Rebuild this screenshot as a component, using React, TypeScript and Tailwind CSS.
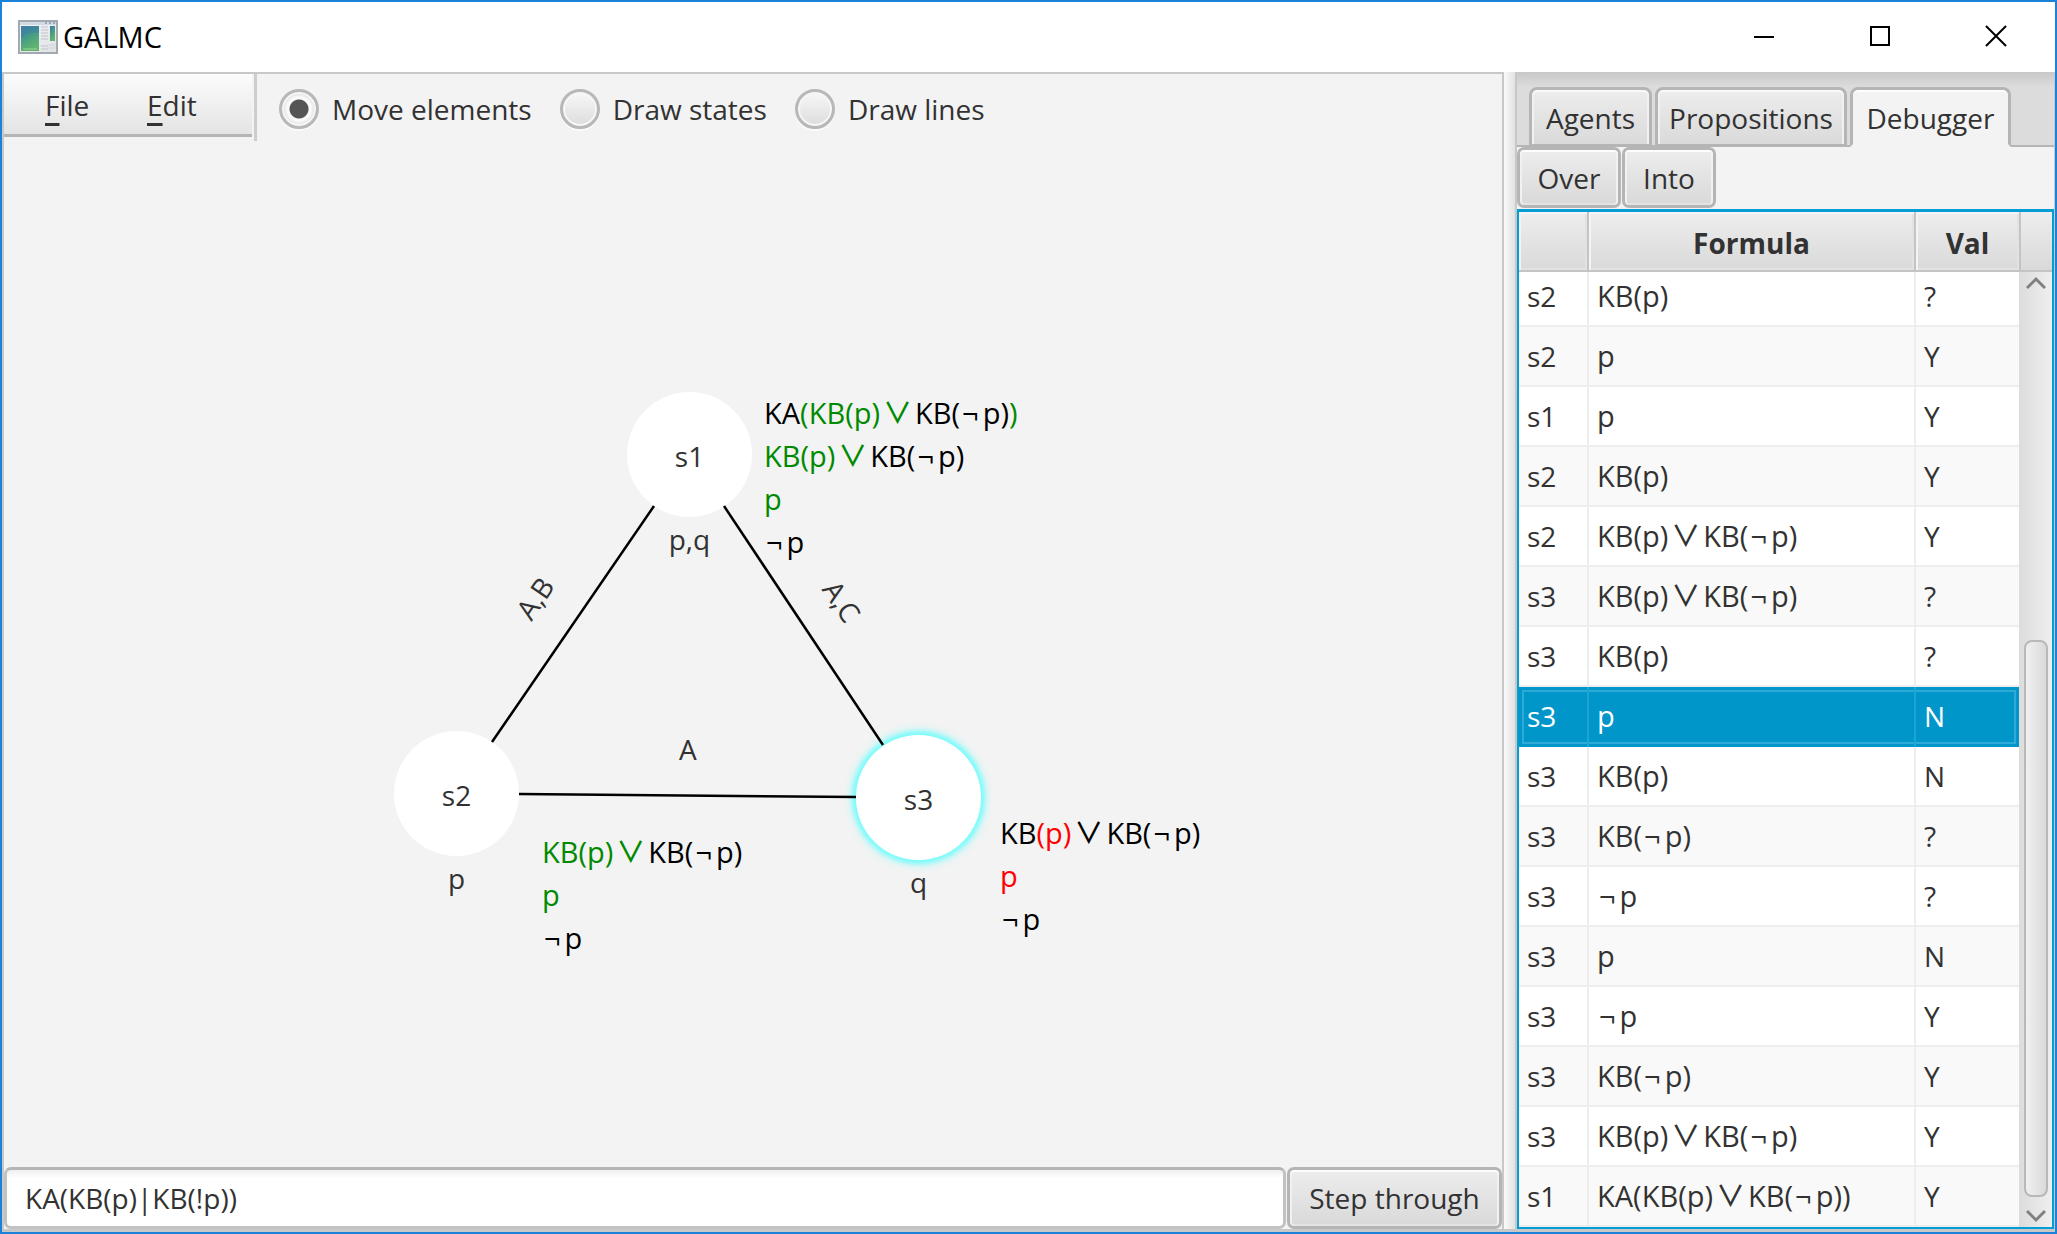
import { useState } from "react";

type Part = { text: string; tone?: "green" | "red" };
type Row = { state: string; formula: string; value: string };

const TONES = { green: "text-[#008a00]", red: "text-[#ff0000]" };

const ROWS: Row[] = [
  { state: "s2", formula: "KB(p)", value: "?" },
  { state: "s2", formula: "p", value: "Y" },
  { state: "s1", formula: "p", value: "Y" },
  { state: "s2", formula: "KB(p)", value: "Y" },
  { state: "s2", formula: "KB(p)∨KB(¬p)", value: "Y" },
  { state: "s3", formula: "KB(p)∨KB(¬p)", value: "?" },
  { state: "s3", formula: "KB(p)", value: "?" },
  { state: "s3", formula: "p", value: "N" },
  { state: "s3", formula: "KB(p)", value: "N" },
  { state: "s3", formula: "KB(¬p)", value: "?" },
  { state: "s3", formula: "¬p", value: "?" },
  { state: "s3", formula: "p", value: "N" },
  { state: "s3", formula: "¬p", value: "Y" },
  { state: "s3", formula: "KB(¬p)", value: "Y" },
  { state: "s3", formula: "KB(p)∨KB(¬p)", value: "Y" },
  { state: "s1", formula: "KA(KB(p)∨KB(¬p))", value: "Y" },
];

const BUTTON =
  "rounded-[7px] border-[3px] border-[#b5b5b5] bg-linear-to-b from-[#ededed] to-[#d9d9d9] shadow-[inset_0_2px_0_#fdfdfd,inset_2px_0_0_#f1f1f1,inset_-2px_0_0_#f1f1f1,inset_0_-2px_0_#e3e3e3]";

/* Inner outline of the selected row, split over its first, middle and last cell. */
const RING = {
  first: "shadow-[inset_3px_3px_0_#0096c9,inset_3px_-3px_0_#0096c9,inset_5px_5px_0_#2fa9d5,inset_5px_-5px_0_#2fa9d5]",
  middle: "shadow-[inset_0_3px_0_#0096c9,inset_0_-3px_0_#0096c9,inset_0_5px_0_#2fa9d5,inset_0_-5px_0_#2fa9d5]",
  last: "shadow-[inset_-3px_3px_0_#0096c9,inset_-3px_-3px_0_#0096c9,inset_-5px_5px_0_#2fa9d5,inset_-5px_-5px_0_#2fa9d5]",
};

/* Operators get a little side bearing so they stand apart from the operands. */
function Formula({ text }: { text: string }) {
  return (
    <>
      {text.split(/([∨¬])/).map((piece, i) => {
        if (piece === "∨") return <span key={i} className="mx-[3px] font-['Noto_Sans_CJK_JP'] leading-none font-medium">∨</span>;
        if (piece === "¬") return <span key={i} className="mr-1 ml-0.5">¬</span>;
        return piece;
      })}
    </>
  );
}

function TitleBar() {
  return (
    <header className="flex h-[70px] shrink-0 items-center bg-white pl-4 text-black">
      <svg width="40" height="34" viewBox="0 0 40 34" aria-hidden="true">
        <defs>
          <linearGradient id="pane" x1="0" y1="0" x2="0.4" y2="1">
            <stop offset="0" stopColor="#3f78a4" />
            <stop offset="0.5" stopColor="#469c86" />
            <stop offset="1" stopColor="#62b56c" />
          </linearGradient>
          <linearGradient id="frame" x1="0" y1="0" x2="1" y2="1">
            <stop offset="0" stopColor="#f4f6f8" />
            <stop offset="1" stopColor="#dfe2e5" />
          </linearGradient>
        </defs>
        <rect x="1" y="1" width="38" height="32" fill="url(#frame)" stroke="#a4a9b1" strokeWidth="2" />
        <rect x="2" y="2" width="36" height="3" fill="#d2dae4" />
        <path d="M27 3h2M31 3h2M35 3h2" stroke="#8d98a5" strokeWidth="1.5" />
        <rect x="3" y="6" width="18" height="25" fill="url(#pane)" />
        <path d="M3 18Q9 12 21 13V6H3z" fill="#3b7fa6" opacity="0.5" />
        <path d="M5 29h14" stroke="#9ad39b" />
        <path d="M23 7h7M23 10h7M23 13h7M23 16h7M23 19h7M23 26h7M23 29h7" stroke="#bfc3c7" strokeWidth="1.2" />
        <rect x="32" y="6" width="5" height="15" fill="url(#pane)" />
        <path d="M31 25h6M31 28h6" stroke="#cfd3d7" />
      </svg>
      <h1 className="ml-[5px] grow text-[29px] leading-10">GALMC</h1>
      <div className="flex h-full pr-px pb-0.5">
        <button aria-label="Minimize" className="flex w-29 items-center justify-center">
          <svg width="22" height="22" viewBox="0 0 22 22" stroke="#000" strokeWidth="2"><path d="M1 12h20" /></svg>
        </button>
        <button aria-label="Maximize" className="flex w-29 items-center justify-center">
          <svg width="22" height="22" viewBox="0 0 22 22" stroke="#000" strokeWidth="2" fill="none"><path d="M2 2h18v18H2z" /></svg>
        </button>
        <button aria-label="Close" className="flex w-29 items-center justify-center">
          <svg width="22" height="22" viewBox="0 0 22 22" stroke="#000" strokeWidth="2"><path d="M1 1l20 20M21 1L1 21" /></svg>
        </button>
      </div>
    </header>
  );
}

function Toolbar() {
  const [mode, setMode] = useState("Move elements");
  return (
    <div className="flex h-[67px] shrink-0">
      <nav className="flex h-[63px] w-[248px] items-center border-b-[3px] border-[#b5b5b5] bg-linear-to-b from-[#fcfcfc] to-[#e4e4e4] pt-0.5 pl-[41px]">
        {["File", "Edit"].map((name) => (
          <button key={name} className="w-[102px] text-left leading-10">
            <span className="underline decoration-[3px] underline-offset-[7px]">{name[0]}</span>
            {name.slice(1)}
          </button>
        ))}
      </nav>
      <div className="ml-0.5 h-full w-[3px] bg-[#cdcdcd]" />
      <div className="flex items-center gap-7 pt-0.5 pl-[22px]">
        {["Move elements", "Draw states", "Draw lines"].map((name) => (
          <label key={name} className="flex items-center gap-[13px]">
            <input
              type="radio"
              name="mode"
              checked={mode === name}
              onChange={() => setMode(name)}
              className="size-10 appearance-none rounded-full border-[3px] border-[#b8b8b8] bg-linear-to-b from-[#f8f8f8] to-[#dcdcdc] shadow-[0_2px_0_#fafafa,inset_0_0_0_2px_#f6f6f6] checked:bg-[radial-gradient(circle,#555_0_9px,#fafafa_10px_12px,#e4e4e4_15px)]"
            />
            <span className="leading-10">{name}</span>
          </label>
        ))}
      </div>
    </div>
  );
}

function StateNode({ name, props, place, active }: { name: string; props: string; place: string; active?: boolean }) {
  return (
    <div className={`absolute flex w-[125px] flex-col items-center ${place}`}>
      <div
        className={`flex size-[125px] items-center justify-center rounded-full bg-white pt-0.5 ${
          active ? "shadow-[0_0_4px_3px_#7ffbfb,0_0_10px_3px_#7ffbfb]" : ""
        }`}
      >
        {name}
      </div>
      <div className="mt-0.5 leading-10">{props}</div>
    </div>
  );
}

function Trace({ lines, place }: { lines: Part[][]; place: string }) {
  return (
    <div className={`absolute text-[29px] whitespace-nowrap text-black ${place}`}>
      {lines.map((parts, i) => (
        <div key={i} className="h-[43px] leading-[43px]">
          {parts.map((part, j) => (
            <span key={j} className={part.tone ? TONES[part.tone] : ""}>
              <Formula text={part.text} />
            </span>
          ))}
        </div>
      ))}
    </div>
  );
}

function Canvas() {
  return (
    <div className="relative grow overflow-hidden">
      <StateNode name="s1" props="p,q" place="left-[623px] top-[251px]" />
      <StateNode name="s2" props="p" place="left-[390px] top-[590px]" />
      <StateNode name="s3" props="q" place="left-[852px] top-[594px]" active />
      <svg className="absolute top-0 left-0" width="1200" height="800" stroke="#000" strokeWidth="2.5" aria-hidden="true">
        <path d="M650 365L488 601M720 365L879 604M515 653L852 656" />
      </svg>
      <span className="absolute top-[437px] left-[509px] -rotate-56 leading-10">A,B</span>
      <span className="absolute top-[440px] left-[817px] rotate-56 leading-10">A,C</span>
      <span className="absolute top-[588px] left-[675px] leading-10">A</span>
      <Trace
        place="left-[760px] top-[250px]"
        lines={[
          [{ text: "KA" }, { text: "(KB(p)∨", tone: "green" }, { text: "KB(¬p)" }, { text: ")", tone: "green" }],
          [{ text: "KB(p)∨", tone: "green" }, { text: "KB(¬p)" }],
          [{ text: "p", tone: "green" }],
          [{ text: "¬p" }],
        ]}
      />
      <Trace
        place="left-[538px] top-[689px]"
        lines={[[{ text: "KB(p)∨", tone: "green" }, { text: "KB(¬p)" }], [{ text: "p", tone: "green" }], [{ text: "¬p" }]]}
      />
      <Trace
        place="left-[996px] top-[670px]"
        lines={[[{ text: "KB" }, { text: "(p)", tone: "red" }, { text: "∨KB(¬p)" }], [{ text: "p", tone: "red" }], [{ text: "¬p" }]]}
      />
    </div>
  );
}

function DebugTable() {
  const [selected, setSelected] = useState(7);
  const head =
    "h-[60px] border-b-2 border-[#c4c4c4] bg-linear-to-b from-[#eeeeee] to-[#d9d9d9] px-0 pt-1 pb-0 text-center font-bold shadow-[inset_2px_2px_0_#f4f4f4,inset_-2px_-2px_0_#e2e2e2]";
  return (
    <div className="flex grow overflow-hidden border-2 border-t-[3px] border-[#039ed3] bg-white">
      <table className="grow table-fixed border-separate border-spacing-0">
        <thead>
          <tr>
            <th aria-label="State" className={`w-[70px] border-r-2 ${head}`} />
            <th className={`border-r-2 ${head}`}>Formula</th>
            <th className={`w-[103px] ${head}`}>Val</th>
          </tr>
        </thead>
        <tbody>
          {ROWS.map((row, i) => {
            const active = i === selected;
            const height = i === 0 ? "h-[55px]" : "h-[60px]";
            const line = active ? "border-[#1ea4d2]" : "border-[#ededed]";
            const edge = active ? "border-b-0 pb-[11px]" : "border-b-2 pb-[9px]";
            const cell = `${height} ${line} ${edge} pt-0 align-bottom leading-10`;
            return (
              <tr
                key={i}
                onClick={() => setSelected(i)}
                className={active ? "bg-[#0096c9] text-white" : i % 2 ? "bg-[#f9f9f9]" : "bg-white"}
              >
                <td className={`border-r-2 pl-2 ${cell} ${active ? RING.first : ""}`}>{row.state}</td>
                <td className={`border-r-2 pl-2 text-[29px] ${cell} ${active ? RING.middle : ""}`}>
                  <Formula text={row.formula} />
                </td>
                <td className={`pl-2 ${cell} ${active ? RING.last : ""}`}>{row.value}</td>
              </tr>
            );
          })}
        </tbody>
      </table>
      <div className="flex w-[33px] shrink-0 flex-col items-center bg-linear-to-r from-[#dcdcdc] to-[#efefef]">
        <div className="h-[60px] w-full shrink-0 border-b-2 border-l-2 border-[#c4c4c4] bg-linear-to-b from-[#eeeeee] to-[#d9d9d9]" />
        <svg className="mt-1 shrink-0" width="20" height="14" viewBox="0 0 20 14" fill="none" stroke="#808080" strokeWidth="3"><path d="M1 12l9-9 9 9" /></svg>
        <div className="mt-[350px] w-6 grow rounded-lg border-2 border-[#b8b8b8] bg-linear-to-r from-[#f0f0f0] to-[#dadada]" />
        <svg className="mt-3 mb-1 shrink-0" width="20" height="14" viewBox="0 0 20 14" fill="none" stroke="#808080" strokeWidth="3"><path d="M1 2l9 9 9-9" /></svg>
      </div>
    </div>
  );
}

function SidePanel() {
  const idle = "border-[#b5b5b5] bg-linear-to-b from-[#ededed] to-[#dadada] shadow-[inset_0_2px_0_#fafafa,inset_2px_0_0_#f1f1f1,inset_-2px_0_0_#f1f1f1]";
  const tab = "rounded-t-[8px] border-[3px] pt-0.5 text-center";
  return (
    <aside className="flex w-[537px] shrink-0 flex-col">
      <div role="tablist" className="flex h-[75px] shrink-0 items-end gap-[3px] bg-linear-to-b from-[#c8c8c8] to-[#dcdcdc] to-20% pl-3 shadow-[inset_0_-2px_0_#b5b5b5]">
        <button role="tab" aria-selected="false" className={`h-[60px] w-[123px] ${tab} ${idle}`}>Agents</button>
        <button role="tab" aria-selected="false" className={`h-[60px] w-[192px] ${tab} ${idle}`}>Propositions</button>
        <button role="tab" aria-selected="true" className={`h-[60px] w-[161px] border-[#b5b5b5] border-b-[#f3f3f3] bg-[#f3f3f3] shadow-[inset_0_2px_0_#fdfdfd] ${tab}`}>Debugger</button>
      </div>
      <div className="flex h-[62px] shrink-0 gap-px">
        <button className={`h-[61px] w-[104px] ${BUTTON}`}>Over</button>
        <button className={`h-[61px] w-[94px] ${BUTTON}`}>Into</button>
      </div>
      <DebugTable />
    </aside>
  );
}

export default function App() {
  const [query, setQuery] = useState("KA(KB(p)|KB(!p))");
  return (
    <div className="flex h-screen flex-col overflow-hidden border-2 border-[#1a82d8] bg-[#f3f3f3] font-['Open_Sans',sans-serif] text-[28px] leading-10 text-[#323232]">
      <TitleBar />
      <div className="flex min-h-0 grow border-r border-b-3 border-l-2 border-[#c8c8c8]">
        <main className="flex min-w-0 grow flex-col border-t-2 border-[#c8c8c8]">
          <Toolbar />
          <Canvas />
          <form className="flex h-[62px] shrink-0 gap-px" onSubmit={(e) => e.preventDefault()}>
            <input
              aria-label="Formula"
              value={query}
              onChange={(e) => setQuery(e.target.value)}
              className="min-w-0 grow rounded-[7px] border-[3px] border-[#c2c2c2] border-t-[#b5b5b5] bg-linear-to-b from-[#f0f0f0] to-white to-15% px-[18px] outline-none"
            />
            <button className={`w-[215px] ${BUTTON}`}>Step through</button>
          </form>
        </main>
        <div className="w-[15px] shrink-0 border-x-2 border-[#c8c8c8] bg-linear-to-r from-[#fafafa] to-[#e2e2e2]" />
        <SidePanel />
      </div>
    </div>
  );
}
